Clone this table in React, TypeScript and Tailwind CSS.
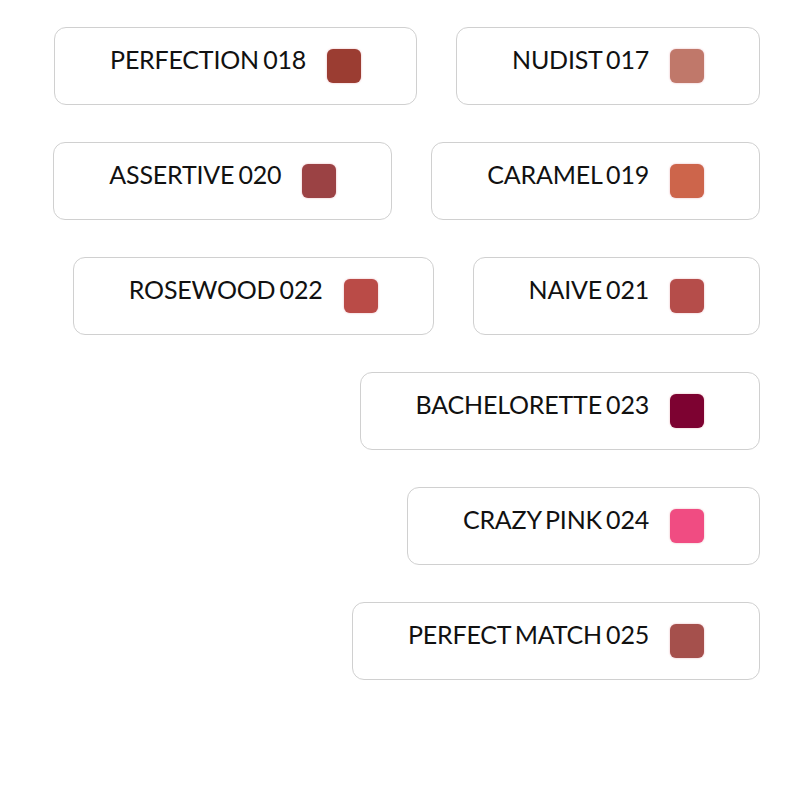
const shades = [
  [
    { name: "PERFECTION 018", color: "#9b3d32" },
    { name: "NUDIST 017", color: "#c0786a" },
  ],
  [
    { name: "ASSERTIVE 020", color: "#9b4244" },
    { name: "CARAMEL 019", color: "#cd654b" },
  ],
  [
    { name: "ROSEWOOD 022", color: "#ba4b47" },
    { name: "NAIVE 021", color: "#b54d4a" },
  ],
  [{ name: "BACHELORETTE 023", color: "#7d0231" }],
  [{ name: "CRAZY PINK 024", color: "#f04c82" }],
  [{ name: "PERFECT MATCH 025", color: "#a5504c" }],
];

const ShadeButton = ({ name, color }: { name: string; color: string }) => (
  <button className="flex h-[78px] items-center gap-[21px] rounded-[12px] border-[1.5px] border-[#d0d0d0] bg-white px-[55px]">
    <span className="mb-[13px] whitespace-nowrap text-[25px] leading-none tracking-[-0.2px] [word-spacing:-2px] text-[#111]">
      {name}
    </span>
    <span
      className="h-[34px] w-[34px] rounded-[6px] shadow-[0_0_2px_rgba(200,60,80,0.45)]"
      style={{ backgroundColor: color }}
    />
  </button>
);

export default function App() {
  return (
    <div
      className="flex min-h-[800px] w-[800px] flex-col gap-[37px] bg-white pr-[40px] pt-[27px]"
      style={{ fontFamily: "Lato, 'Open Sans', sans-serif" }}
    >
      {shades.map((row, i) => (
        <div key={i} className="flex justify-end gap-[39px]">
          {row.map((s) => (
            <ShadeButton key={s.name} {...s} />
          ))}
        </div>
      ))}
    </div>
  );
}
